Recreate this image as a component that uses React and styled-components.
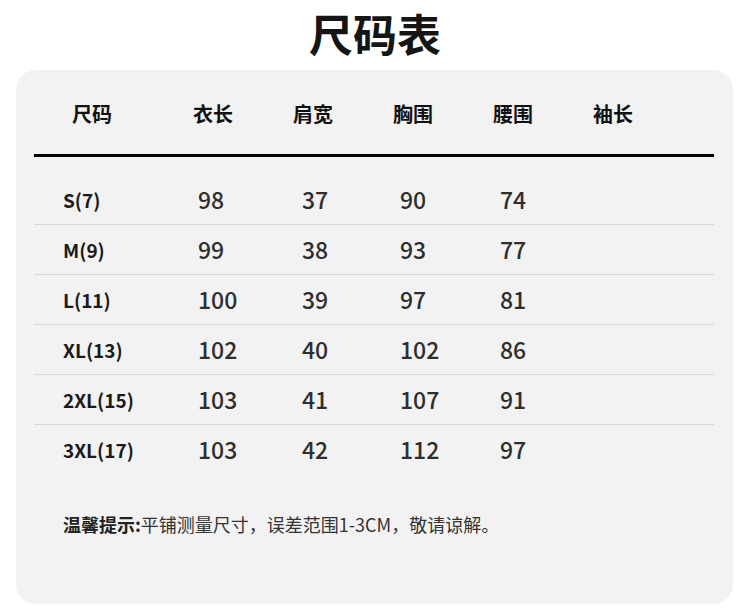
import React from "react";
import styled, { createGlobalStyle } from "styled-components";

const Global = createGlobalStyle`
  html, body { margin: 0; padding: 0; background: #ffffff; }
  body { font-family: "Noto Sans CJK SC", "Noto Sans", sans-serif; }
`;

const Page = styled.div`
  width: 750px;
  display: flex;
  flex-direction: column;
  align-items: center;
`;

const Title = styled.h1`
  margin: 0;
  height: 70px;
  line-height: 66px;
  font-size: 44px;
  font-weight: 700;
  color: #151515;
  letter-spacing: 0;
`;

const Card = styled.div`
  align-self: stretch;
  margin: 0 17px 0 16px;
  height: 534px;
  box-sizing: border-box;
  background: #f2f2f2;
  border-radius: 20px;
  padding: 0 19px 0 18px;
  display: flex;
  flex-direction: column;
`;

const cols = "159px repeat(5, 100px) 1fr";

const HeadRow = styled.div`
  display: grid;
  grid-template-columns: ${cols};
  align-items: center;
  height: 87px;
  padding-top: 3px;
  box-sizing: border-box;
  border-bottom: 3px solid #000;
`;

const HeadCell = styled.div`
  font-size: 20px;
  font-weight: 700;
  color: #111;
  padding-left: ${(p) => p.$pad || 0}px;
  white-space: nowrap;
`;

const Body = styled.div`
  padding-top: 18px;
  display: flex;
  flex-direction: column;
`;

const Row = styled.div`
  display: grid;
  grid-template-columns: ${cols};
  align-items: center;
  height: 50px;
  padding-bottom: 1px;
  box-sizing: border-box;
  border-bottom: 1px solid ${(p) => (p.$last ? "transparent" : "#d8d8d8")};
`;

const SizeCell = styled.div`
  padding-left: 29px;
  font-size: 19px;
  font-weight: 700;
  color: #1a1a1a;
  white-space: nowrap;
`;

const NumCell = styled.div`
  padding-left: ${(p) => p.$shift}px;
  font-size: 23px;
  font-weight: 500;
  color: #2e2e2e;
  white-space: nowrap;
`;

const Note = styled.p`
  margin: 36px 0 0 29px;
  font-size: 18px;
  line-height: 26px;
  color: #333;
  white-space: nowrap;
`;

const NoteLabel = styled.span`
  font-weight: 700;
  color: #222;
`;

const headers = ["尺码", "衣长", "肩宽", "胸围", "腰围", "袖长"];
const shifts = [5, 9, 7, 7, 7];
const rows = [
  ["S(7)", "98", "37", "90", "74"],
  ["M(9)", "99", "38", "93", "77"],
  ["L(11)", "100", "39", "97", "81"],
  ["XL(13)", "102", "40", "102", "86"],
  ["2XL(15)", "103", "41", "107", "91"],
  ["3XL(17)", "103", "42", "112", "97"],
];

export default function App() {
  return (
    <Page>
      <Global />
      <Title>尺码表</Title>
      <Card>
        <HeadRow>
          {headers.map((h, i) => (
            <HeadCell key={h} $pad={i === 0 ? 38 : 0}>
              {h}
            </HeadCell>
          ))}
        </HeadRow>
        <Body>
          {rows.map((r, ri) => (
            <Row key={r[0]} $last={ri === rows.length - 1}>
              <SizeCell>{r[0]}</SizeCell>
              {r.slice(1).map((v, i) => (
                <NumCell key={i} $shift={shifts[i]}>
                  {v}
                </NumCell>
              ))}
              <NumCell $shift={0} />
            </Row>
          ))}
        </Body>
        <Note>
          <NoteLabel>温馨提示:</NoteLabel>平铺测量尺寸，误差范围1-3CM，敬请谅解。
        </Note>
      </Card>
    </Page>
  );
}
